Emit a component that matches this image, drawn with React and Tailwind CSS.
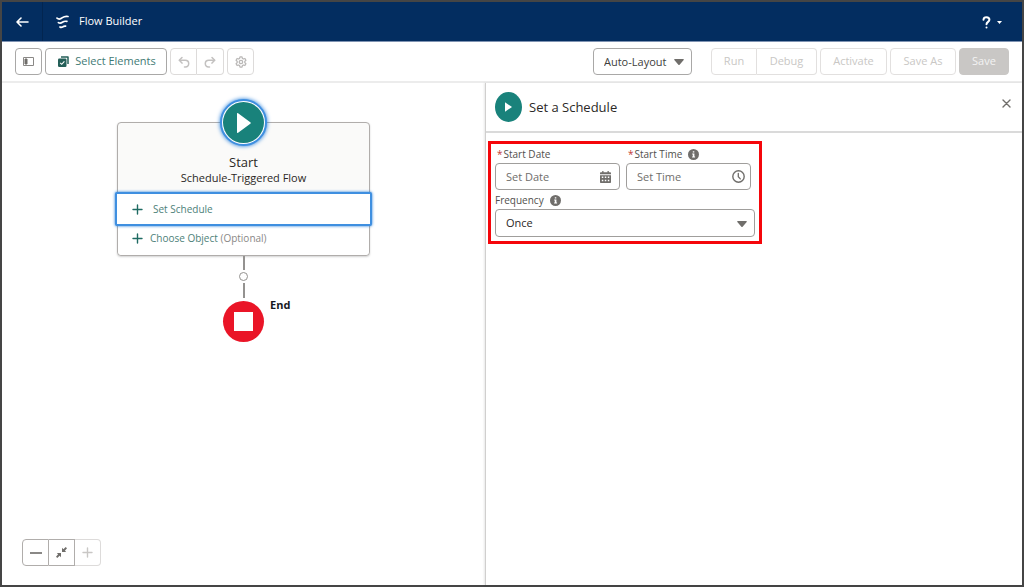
import { clsx } from "clsx";

function ToolButton({ className, children, ...props }) {
  return (
    <button
      type="button"
      className={clsx(
        "flex h-[27px] shrink-0 items-center justify-center border text-[11px]",
        className
      )}
      {...props}
    >
      {children}
    </button>
  );
}

function FlowIcon() {
  return (
    <svg width="13" height="14" viewBox="0 0 13 14" fill="none" stroke="currentColor" strokeWidth="1.7" strokeLinecap="round" strokeLinejoin="round">
      <path d="M1 3.100C2.600 4.500 4.600 4.100 6.400 2.700 8 1.500 9.600 1.100 12 1.500" />
      <path d="M2.400 7.600c1.400 1 2.800.6 4-.3 1.300-1 2.700-1.300 4.500-.9" />
      <path d="M4 12c1 .7 2 .4 2.900-.2.800-.6 1.600-.8 2.700-.6" />
    </svg>
  );
}

function InfoIcon() {
  return (
    <svg width="11" height="11" viewBox="0 0 11 11">
      <circle cx="5.5" cy="5.5" r="5.5" fill="#706e6b" />
      <path d="M4.800 2.200h1.500v1.400H4.800zM4.200 4.600h2.200v3h.7v1H4.100v-1h.7V5.600h-.6z" fill="#fff" />
    </svg>
  );
}

function UndoIcon({ className }) {
  return (
    <svg className={className} width="12" height="12" viewBox="0 0 12 12" fill="none" stroke="currentColor" strokeWidth="1.5" strokeLinecap="round" strokeLinejoin="round">
      <path d="M4 1.500 1.300 4.300 4 7.100" />
      <path d="M1.500 4.300h5.700c2.100 0 3.500 1.300 3.500 3.300S9.400 11 7.300 11H6.500" />
    </svg>
  );
}

function PlusIcon() {
  return (
    <svg width="11" height="11" viewBox="0 0 11 11" stroke="currentColor" strokeWidth="1.4" strokeLinecap="round">
      <path d="M5.500 1v9M1 5.500h9" />
    </svg>
  );
}

function DownTriangle({ className }) {
  return (
    <svg className={className} width="10" height="6" viewBox="0 0 10 6" fill="#706e6b">
      <path d="M.8 0h8.400c.6 0 .8.500.5.900L5.600 5.700c-.3.400-.9.400-1.200 0L.3.900C0 .5.200 0 .8 0z" />
    </svg>
  );
}

function Header() {
  return (
    <header className="flex h-10 items-stretch border-b border-[#7f93b2] bg-[#032d60] text-white">
      <a href="#back" aria-label="Back" className="flex w-[41px] items-center justify-center border-r border-[#022550]">
        <svg width="13" height="10" viewBox="0 0 13 10" fill="none" stroke="currentColor" strokeWidth="1.6" strokeLinecap="round" strokeLinejoin="round">
          <path d="M12 5H1M5 1 1 5l4 4" />
        </svg>
      </a>
      <div className="flex items-center gap-[10px] pl-[13px]">
        <FlowIcon />
        <h1 className="text-[11px]">Flow Builder</h1>
      </div>
      <button type="button" aria-label="Help" className="ml-auto mr-5 flex items-center gap-[6px] pt-px">
        <svg width="9" height="13" viewBox="0 0 9 13" fill="none" stroke="currentColor" strokeWidth="2" strokeLinecap="round">
          <path d="M1.500 3.700C1.600 2.200 2.800 1.300 4.400 1.300s3 .9 3 2.500C7.400 5.800 4.500 6 4.500 8.300" />
          <path d="M4.500 11.500v.1" />
        </svg>
        <svg width="5" height="3" viewBox="0 0 5 3" fill="currentColor">
          <path d="M0 0h5L2.500 3z" />
        </svg>
      </button>
    </header>
  );
}

function Toolbar() {
  return (
    <div className="flex h-[41px] items-center gap-[3px] border-b-2 border-[#ececec] px-[13px]">
      <ToolButton aria-label="Toggle toolbox" className="w-[27px] rounded border-[#a9a8a7]">
        <svg width="11" height="9" viewBox="0 0 11 9" fill="none" stroke="#8a8886">
          <path d="M.5.5h10v8H.5z" />
          <path d="M2 2h2v5H2z" fill="#706e6b" stroke="#706e6b" />
        </svg>
      </ToolButton>
      <ToolButton className="w-[122px] gap-[6px] rounded border-[#a9a8a7] pl-[2px] text-[#3f7a74]">
        <svg width="11" height="11" viewBox="0 0 11 11" fill="none">
          <path d="M3 1h7v7" stroke="#245f58" strokeWidth="1.500" strokeLinejoin="round" />
          <rect x="0" y="2.500" width="8.500" height="8.500" rx="1.200" fill="#245f58" />
          <path d="m2.200 6.800 1.500 1.500 2.700-3" stroke="#fff" strokeWidth="1.100" />
        </svg>
        Select Elements
      </ToolButton>
      <div className="flex">
        <ToolButton disabled aria-label="Undo" className="w-[27px] rounded-l border-[#dddbda] text-[#c3c1c0]">
          <UndoIcon />
        </ToolButton>
        <ToolButton disabled aria-label="Redo" className="w-[27px] rounded-r border-l-0 border-[#dddbda] text-[#c3c1c0]">
          <UndoIcon className="-scale-x-100" />
        </ToolButton>
      </div>
      <ToolButton disabled aria-label="Settings" className="w-[27px] rounded border-[#dddbda] text-[#bab8b7]">
        <svg width="12" height="12" viewBox="0 0 12 12" fill="none" stroke="currentColor">
          <path strokeWidth="1.300" strokeLinejoin="round" d="M5 .9h2l.4 1.500 1 .6 1.500-.5 1 1.800L9.800 5.400v1.200l1.100 1.100-1 1.800L8.400 9l-1 .6L7 11.100H5l-.4-1.500-1-.6-1.500.5-1-1.800 1.100-1.100V5.400L1.100 4.300l1-1.800 1.500.5 1-.6z" />
          <circle cx="6" cy="6" r="1.700" strokeWidth="1.300" />
        </svg>
      </ToolButton>

      <div className="relative ml-auto mr-4">
        <select
          aria-label="Layout mode"
          className="h-[27px] w-[99px] appearance-none rounded border border-[#a9a8a7] bg-white pl-[10px] text-[11px] text-[#3e3e3c]"
        >
          <option>Auto-Layout</option>
          <option>Free-Form</option>
        </select>
        <DownTriangle className="pointer-events-none absolute right-2 top-[11px]" />
      </div>
      <div className="flex">
        <ToolButton disabled className="w-[46px] rounded-l border-[#e2e0df] text-[#c9c7c5]">Run</ToolButton>
        <ToolButton disabled className="w-[60px] rounded-r border-l-0 border-[#e2e0df] text-[#c9c7c5]">Debug</ToolButton>
      </div>
      <ToolButton disabled className="w-[67px] rounded border-[#e2e0df] text-[#c9c7c5]">Activate</ToolButton>
      <ToolButton disabled className="w-[66px] rounded border-[#e2e0df] text-[#c9c7c5]">Save As</ToolButton>
      <ToolButton disabled className="w-[50px] rounded border-[#c9c7c5] bg-[#c9c7c5] text-[#f3f3f3]">Save</ToolButton>
    </div>
  );
}

function StartNode() {
  return (
    <section className="flex flex-col items-center">
      <div className="z-10 flex size-[47px] items-center justify-center rounded-full border-2 border-[#3f8fe0] bg-white shadow-[0_0_4px_#1b78d8]">
        <div className="flex size-[41px] shrink-0 items-center justify-center rounded-full bg-[#19827b]">
          <svg width="14" height="20" viewBox="0 0 14 20" fill="#fff">
            <path d="M0 .8C0 .1.600-.1 1.100.3l12.200 8.900c.6.400.6 1.100 0 1.500L1.100 19.700C.600 20.100 0 19.900 0 19.200z" />
          </svg>
        </div>
      </div>
      <div className="-mt-6 w-[253px] rounded border border-[#b0adab] bg-[#fafaf9] shadow-[0_1px_2px_#0000002e]">
        <div className="flex h-[69px] flex-col items-center justify-end pb-[6px] text-[#2b2826]">
          <h2 className="text-[13px] leading-4">Start</h2>
          <p className="text-[11px] leading-4">Schedule-Triggered Flow</p>
        </div>
        <button
          type="button"
          className="relative -mx-[3px] flex h-[34px] w-[257px] items-center gap-[10px] rounded-xs border-2 border-[#3f8fe0] bg-white pl-[15px] text-[10px] text-[#4d8179] shadow-[0_0_3px_#1b78d8]"
        >
          <span className="text-[#1f6b63]"><PlusIcon /></span>
          Set Schedule
        </button>
        <button type="button" className="flex h-[29px] w-full items-center gap-[7px] rounded-b bg-white pb-1 pl-[14px] text-[10px] text-[#4d8179]">
          <span className="text-[#1f6b63]"><PlusIcon /></span>
          <span>Choose Object <span className="text-[#8a8886]">(Optional)</span></span>
        </button>
      </div>
    </section>
  );
}

function Canvas() {
  return (
    <main className="relative flex w-[483px] shrink-0 flex-col items-center pt-4">
      <StartNode />
      <div className="h-[14px] w-[2px] bg-[#949290]" />
      <button type="button" aria-label="Add element" className="my-[2px] size-[9px] rounded-full border border-[#949290]" />
      <div className="h-[15px] w-[2px] bg-[#949290]" />
      <div className="relative mt-[3px] flex size-[41px] items-center justify-center rounded-full bg-[#ea1527]">
        <div className="size-[19px] bg-white" />
        <span className="absolute -top-1 left-[47px] text-[11px] font-bold leading-4 text-[#16191f]">End</span>
      </div>

      <div className="absolute bottom-[19px] left-5 flex">
        <ToolButton aria-label="Zoom out" className="w-[27px] rounded-l border-[#b0adab] text-[#8a8886]">
          <svg width="12" height="2" viewBox="0 0 12 2" fill="currentColor">
            <path d="M0 0h12v2H0z" />
          </svg>
        </ToolButton>
        <ToolButton aria-label="Zoom to fit" className="w-[26px] border-l-0 border-[#b0adab] text-[#706e6b]">
          <svg width="11" height="11" viewBox="0 0 11 11" fill="currentColor">
            <path d="M6 .8v4.200h4.200L8.900 3.700 11 1.300 9.700 0 7.400 2.200zM5 10.200V6H.8l1.300 1.300L0 9.700 1.300 11l2.300-2.200z" />
          </svg>
        </ToolButton>
        <ToolButton disabled aria-label="Zoom in" className="w-[26px] rounded-r border-l-0 border-[#dddbda] text-[#c9c7c5]">
          <PlusIcon />
        </ToolButton>
      </div>
    </main>
  );
}

function TextField({ id, label, placeholder, info, icon }) {
  return (
    <div className="w-[125px]">
      <div className="flex h-[19px] items-center gap-[6px] pl-[2px] pt-px">
        <label htmlFor={id} className="text-[10px] text-[#514f4d]">
          <span className="mr-px text-[#c23934]">*</span>
          {label}
        </label>
        {info && <InfoIcon />}
      </div>
      <div className="relative">
        <input
          id={id}
          type="text"
          required
          placeholder={placeholder}
          className="h-[27px] w-full rounded border border-[#a09e9c] bg-white pl-[10px] pr-6 text-[11px] placeholder:text-[#706e6b]"
        />
        <span className="pointer-events-none absolute inset-y-0 right-0 flex w-[30px] items-center justify-center text-[#706e6b]">
          {icon}
        </span>
      </div>
    </div>
  );
}

function CalendarIcon() {
  return (
    <svg width="11" height="12" viewBox="0 0 11 12" fill="currentColor">
      <path d="M2.200 0h1.300v1.200h4V0h1.300v1.200h1.400c.500 0 .8.300.8.800v1.300H0V2c0-.5.300-.8.800-.8h1.400z" />
      <path fillRule="evenodd" d="M0 4.200h11v6.700c0 .6-.4 1.100-1 1.100H1c-.6 0-1-.5-1-1.100zM1.800 5.500V7h1.500V5.500zm3 0V7h1.500V5.500zm3 0V7h1.500V5.500zM1.800 8.700v1.500h1.500V8.700zm3 0v1.500h1.500V8.700zm3 0v1.500h1.500V8.700z" />
    </svg>
  );
}

function ClockIcon() {
  return (
    <svg className="ml-1" width="13" height="13" viewBox="0 0 13 13" fill="none" stroke="currentColor" strokeLinecap="round">
      <circle cx="6.500" cy="6.500" r="5.700" strokeWidth="1.400" />
      <path d="M6.300 3.300v3.400l2 2.200" strokeWidth="1.300" />
    </svg>
  );
}

function SchedulePanel() {
  return (
    <aside className="min-w-0 flex-1 border-l border-[#d0cfce] shadow-[-1px_0_2px_#00000018]">
      <div className="flex h-[50px] items-center gap-[7px] border-b-2 border-[#dadada] pl-[9px] pr-[11px]">
        <div className="flex h-[30px] w-[27px] items-center justify-center rounded-[50%] bg-[#19827b]">
          <svg width="7" height="10" viewBox="0 0 7 10" fill="#fff">
            <path d="M0 .3 7 5 0 9.700z" />
          </svg>
        </div>
        <h2 className="pt-px text-[13px] text-[#2b2826]">Set a Schedule</h2>
        <button type="button" aria-label="Close" className="mb-2 ml-auto text-[#706e6b]">
          <svg width="9" height="9" viewBox="0 0 9 9" fill="none" stroke="currentColor" strokeWidth="1.400" strokeLinecap="round">
            <path d="m1 1 7 7M8 1 1 8" />
          </svg>
        </button>
      </div>

      <form className="ml-[2px] mt-2 w-[274px] border-3 border-[#f5060b] px-1 pb-1">
        <div className="flex gap-[6px]">
          <TextField id="start-date" label="Start Date" placeholder="Set Date" icon={<CalendarIcon />} />
          <TextField id="start-time" label="Start Time" placeholder="Set Time" info icon={<ClockIcon />} />
        </div>
        <div className="flex h-[19px] items-center gap-[6px] pt-px">
          <label htmlFor="frequency" className="text-[10px] text-[#514f4d]">Frequency</label>
          <InfoIcon />
        </div>
        <div className="relative">
          <select
            id="frequency"
            className="h-[28px] w-full appearance-none rounded border border-[#a09e9c] bg-white pl-[10px] text-[11px] text-[#2b2826]"
          >
            <option>Once</option>
            <option>Daily</option>
            <option>Weekly</option>
          </select>
          <DownTriangle className="pointer-events-none absolute right-2 top-[12px]" />
        </div>
      </form>
    </aside>
  );
}

export default function App() {
  return (
    <div className="flex min-h-screen flex-col border-2 border-[#454545] bg-white font-['Open_Sans',sans-serif]">
      <Header />
      <Toolbar />
      <div className="flex flex-1">
        <Canvas />
        <SchedulePanel />
      </div>
    </div>
  );
}
